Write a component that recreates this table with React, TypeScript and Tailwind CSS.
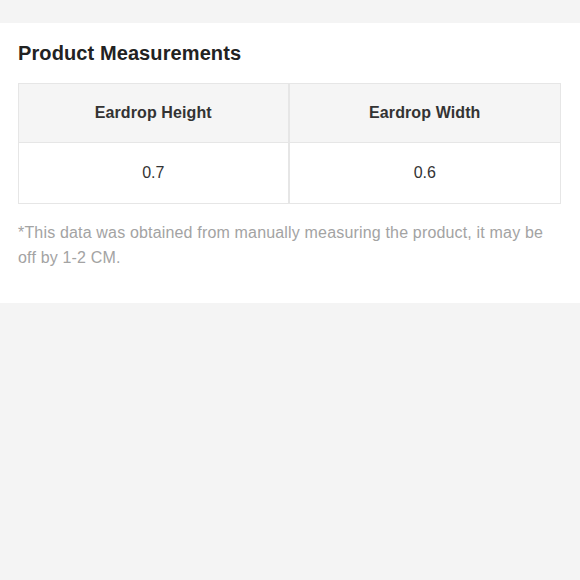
export default function App() {
  return (
    <div className="min-h-[580px] w-[580px] bg-[#f4f4f4] pt-[23px]" style={{ fontFamily: '"Liberation Sans", Arial, sans-serif' }}>
      <div className="bg-white pl-[18px] pr-[19px] pt-[18px] pb-[33px]">
        <h2 className="text-[20px] leading-[24px] font-bold tracking-[0.1px] text-[#222]">Product Measurements</h2>
        <div className="mt-[18px] grid grid-cols-2 border border-[#e6e6e6]">
          <div className="flex h-[59px] items-center justify-center border-r-2 border-b border-[#e6e6e6] bg-[#f5f5f5] text-[16px] font-bold tracking-[0.1px] text-[#333]">Eardrop Height</div>
          <div className="flex h-[59px] items-center justify-center border-b border-[#e6e6e6] bg-[#f5f5f5] text-[16px] font-bold tracking-[0.1px] text-[#333]">Eardrop Width</div>
          <div className="flex h-[60px] items-center justify-center border-r-2 border-[#e6e6e6] text-[16px] text-[#333]">0.7</div>
          <div className="flex h-[60px] items-center justify-center text-[16px] text-[#333]">0.6</div>
        </div>
        <p className="mt-[16px] text-[16px] leading-[25px] tracking-[0.17px] text-[#a3a3a3]">*This data was obtained from manually measuring the product, it may be off by 1-2 CM.</p>
      </div>
    </div>
  );
}
